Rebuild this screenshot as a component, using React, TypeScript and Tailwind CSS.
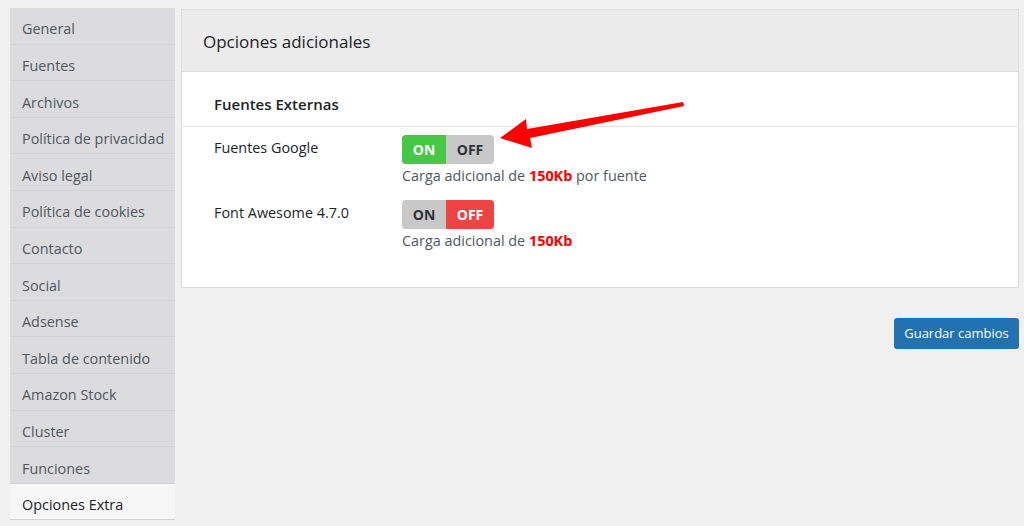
import React from "react";

const menu = [
  "General",
  "Fuentes",
  "Archivos",
  "Política de privacidad",
  "Aviso legal",
  "Política de cookies",
  "Contacto",
  "Social",
  "Adsense",
  "Tabla de contenido",
  "Amazon Stock",
  "Cluster",
  "Funciones",
  "Opciones Extra",
];

function Toggle({ on }: { on: boolean }) {
  return (
    <div className="flex h-[29px] w-[92px] overflow-hidden rounded-[4px] bg-[#c8c8c8] text-[14px] font-bold leading-[29px]">
      <span
        className={`w-[44px] text-center ${on ? "bg-[#46c846] text-white" : "text-[#2c3338]"}`}
      >
        ON
      </span>
      <span
        className={`flex-1 text-center ${!on ? "bg-[#f04444] text-white" : "text-[#2c3338]"}`}
      >
        OFF
      </span>
    </div>
  );
}

export default function App() {
  return (
    <div
      className="relative flex h-[526px] w-[1024px] overflow-hidden bg-[#f0f0f1] pl-[10px] pt-[8px]"
      style={{ fontFamily: "'Open Sans', sans-serif" }}
    >
      {/* menú lateral */}
      <ul className="w-[165px] shrink-0">
        {menu.map((item) => {
          const active = item === "Opciones Extra";
          return (
            <li
              key={item}
              className={`flex h-[36.6px] items-center border-b border-[#d3d3d5] pl-[12px] pt-[7px] text-[14.4px] ${
                active ? "bg-[#f6f6f6] text-[#1d2327]" : "bg-[#dcdcde] text-[#50575e]"
              }`}
            >
              {item}
            </li>
          );
        })}
      </ul>

      {/* panel principal */}
      <div className="ml-[6px] flex w-[838px] flex-col items-end pt-px">
        <div className="w-full border border-[#dcdcde] bg-white">
          <div className="flex h-[62px] items-center border-b border-[#dcdcde] bg-[#ebebeb] pl-[21px] pt-[2px] text-[17px] text-[#1d2327]">
            Opciones adicionales
          </div>
          <div className="border-b border-[#e2e2e2] pb-[11px] pl-[32px] pt-[21px] text-[15px] font-semibold leading-[22px] text-[#1d2327]">
            Fuentes Externas
          </div>
          <div className="pb-[36px] pl-[32px] pt-[8px] text-[14.4px]">
            <div className="flex">
              <div className="w-[188px] leading-[26px] text-[#1d2327]">Fuentes Google</div>
              <div>
                <Toggle on={true} />
                <p className="mt-[2px] leading-[20px] text-[#50575e]">
                  Carga adicional de <b className="text-[#ff0000]">150Kb</b> por fuente
                </p>
              </div>
            </div>
            <div className="mt-[14px] flex">
              <div className="w-[188px] leading-[26px] text-[#1d2327]">Font Awesome 4.7.0</div>
              <div>
                <Toggle on={false} />
                <p className="mt-[2px] leading-[20px] text-[#50575e]">
                  Carga adicional de <b className="text-[#ff0000]">150Kb</b>
                </p>
              </div>
            </div>
          </div>
        </div>
        <button className="mt-[30px] h-[31px] w-[125px] rounded-[3px] bg-[#2271b1] text-[13px] text-white">
          Guardar cambios
        </button>
      </div>

      {/* flecha roja */}
      <svg
        className="pointer-events-none absolute left-0 top-0"
        width="1024"
        height="526"
        viewBox="0 0 1024 526"
      >
        <polygon
          points="500,138 526,119 527,129 683,102 684,106 530,138 532,148"
          fill="#ff0000"
        />
      </svg>
    </div>
  );
}
